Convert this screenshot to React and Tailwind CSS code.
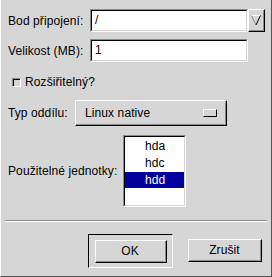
import React from "react";

function Sunken({ className = "", children }) {
  return (
    <div className={"border-t border-l border-t-[#8c8c8c] border-l-[#8c8c8c] border-b border-r border-b-white border-r-white " + className}>
      <div className="h-full w-full border-t border-l border-t-black border-l-black border-b border-r border-b-[#d6d6d6] border-r-[#d6d6d6] bg-white">
        {children}
      </div>
    </div>
  );
}

function Raised({ className = "", innerClass = "", children }) {
  return (
    <div className={"border-t border-l border-t-white border-l-white border-b border-r border-b-black border-r-black " + className}>
      <div className={"h-full w-full border-b border-r border-b-[#8c8c8c] border-r-[#8c8c8c] " + innerClass}>
        {children}
      </div>
    </div>
  );
}

export default function App() {
  return (
    <div
      className="w-[272px] h-[277px] bg-[#d6d6d6] text-[12px] tracking-[0.1px] text-black border-r border-b border-r-[#555] border-b-[#555] border-l border-l-white flex flex-col"
      style={{ fontFamily: '"Liberation Sans", Arial, sans-serif' }}
    >
      <div className="flex items-center mt-[9px] pl-[7px] h-[23px]">
        <div className="w-[82px] whitespace-nowrap">Bod připojení:</div>
        <Sunken className="w-[158px] h-[23px]">
          <div className="pl-[3px] leading-[19px]">/</div>
        </Sunken>
        <Raised className="w-[17px] h-[23px]" innerClass="flex items-center justify-center">
          <svg width="12" height="14" viewBox="0 0 12 14">
            <path d="M1.5 2.5 L6 12" fill="none" stroke="#8c8c8c" strokeWidth="1" />
            <path d="M1.5 2.5 L10.5 2.5" fill="none" stroke="white" strokeWidth="1" />
            <path d="M10.5 2.5 L6 12" fill="none" stroke="black" strokeWidth="1" />
          </svg>
        </Raised>
      </div>
      <div className="flex items-center mt-[7px] pl-[7px] h-[23px]">
        <div className="w-[82px] whitespace-nowrap">Velikost (MB):</div>
        <Sunken className="w-[158px] h-[23px]">
          <div className="pl-[3px] leading-[19px]">1</div>
        </Sunken>
      </div>
      <div className="flex items-center mt-[13px] pl-[11px] h-[14px]">
        <div className="w-[9px] h-[9px] border-t border-l border-t-[#8c8c8c] border-l-[#8c8c8c] border-b border-r border-b-white border-r-white bg-[#d6d6d6]">
          <div className="w-full h-full border-t border-l border-t-black border-l-black"></div>
        </div>
        <div className="ml-[4px]">Rozšiřitelný?</div>
      </div>
      <div className="flex items-center mt-[11px] pl-[7px] h-[26px]">
        <div className="w-[67px] whitespace-nowrap">Typ oddílu:</div>
        <Raised className="w-[152px] h-[26px]" innerClass="flex items-center justify-between pl-[9px] pr-[8px]">
          <span>Linux native</span>
          <div className="w-[14px] h-[8px] border-t border-l border-t-white border-l-white border-b border-r border-b-black border-r-black"></div>
        </Raised>
      </div>
      <div className="flex items-center mt-[9px] pl-[7px] h-[72px]">
        <div className="w-[115px] whitespace-nowrap">Použitelné jednotky:</div>
        <Sunken className="w-[63px] h-[72px]">
          <div className="flex flex-col pt-[1px]">
            <div className="h-[17px] leading-[17px] pl-[20px]">hda</div>
            <div className="h-[17px] leading-[17px] pl-[20px]">hdc</div>
            <div className="h-[16px] leading-[16px] pl-[20px] bg-[#00009c] text-white">hdd</div>
          </div>
        </Sunken>
      </div>
      <div className="mt-[13px] mx-[4px] border-t border-t-[#8c8c8c] border-b border-b-white"></div>
      <div className="flex mt-[12px] pl-[87px] h-[34px]">
        <div className="w-[85px] h-[34px] border border-black border-r-white border-b-white flex items-center justify-center">
          <Raised className="w-[72px] h-[23px]" innerClass="flex items-center justify-center">OK</Raised>
        </div>
        <div className="pl-[15px] pt-[5px]">
          <Raised className="w-[74px] h-[23px]" innerClass="flex items-center justify-center">Zrušit</Raised>
        </div>
      </div>
    </div>
  );
}
